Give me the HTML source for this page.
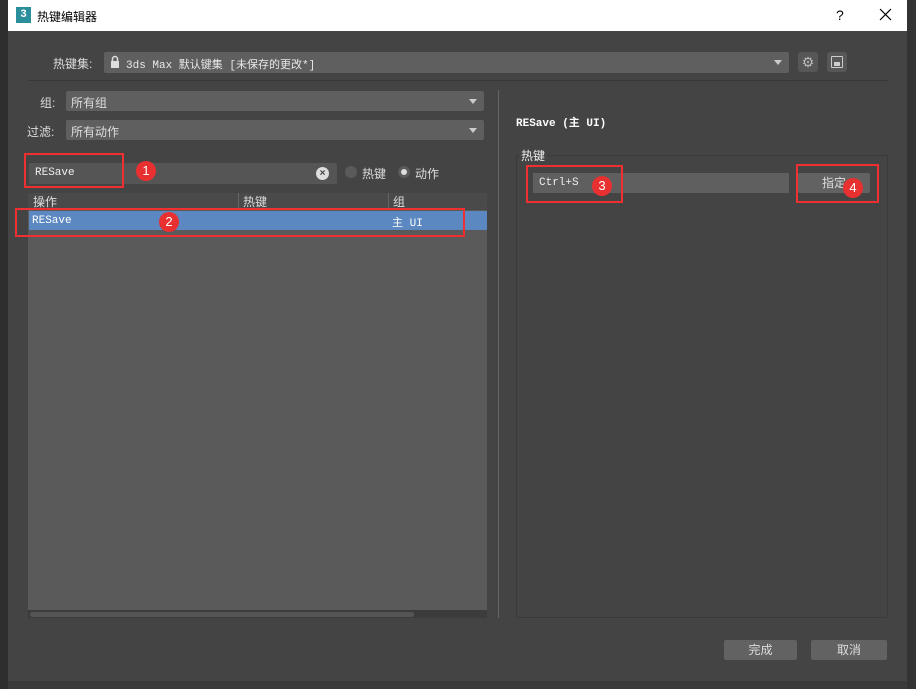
<!DOCTYPE html>
<html><head><meta charset="utf-8"><style>
*{margin:0;padding:0;box-sizing:border-box}
body{width:916px;height:689px;background:#3a3a3a;position:relative;overflow:hidden;font-family:"Liberation Sans","Noto Sans CJK SC",sans-serif;font-size:12px;color:#ddd}
.a{position:absolute}
.mono{font-family:"Liberation Mono","Noto Sans CJK SC",monospace;font-size:11px}
.combo{background:#5f5f5f;border-radius:2px}
.arr{position:absolute;right:7px;top:8px;width:0;height:0;border-left:4px solid transparent;border-right:4px solid transparent;border-top:5px solid #ccc}
.red{position:absolute;border:2px solid #f03030}
.num{position:absolute;width:20px;height:20px;border-radius:50%;background:#e83030;color:#fff;font-size:13px;text-align:center;line-height:20px;font-family:"Liberation Sans",sans-serif}
.btn{position:absolute;background:#626262;border-radius:2px;text-align:center;line-height:20px;color:#ddd}
</style></head><body>
<div class="a" style="left:0;top:0;width:8px;height:689px;background:#2e2e2e"></div>
<div class="a" style="left:907px;top:0;width:9px;height:689px;background:#333"></div>
<div class="a" style="left:8px;top:0;width:899px;height:681px;background:#444"></div>
<div class="a" style="left:8px;top:0;width:899px;height:31px;background:#fff"></div>
<div class="a" style="left:16px;top:7px;width:15px;height:16px;background:#2a8f9a;color:#fff;font-weight:bold;font-size:11px;text-align:center;line-height:15px">3</div>
<div class="a" style="left:37px;top:8px;color:#000;font-size:12px">热键编辑器</div>
<div class="a" style="left:836px;top:7px;color:#000;font-size:14px">?</div>
<svg class="a" style="left:879px;top:8px" width="13" height="13"><path d="M1 1L12 12M12 1L1 12" stroke="#000" stroke-width="1.2"/></svg>

<div class="a" style="left:53px;top:55px">热键集:</div>
<div class="a combo" style="left:104px;top:52px;width:685px;height:21px">
<svg class="a" style="left:6px;top:3px" width="10" height="14"><path d="M2.5 6V4a2.5 2.5 0 0 1 5 0v2" stroke="#ddd" stroke-width="1.5" fill="none"/><rect x="1" y="6" width="8" height="7" fill="#ddd"/></svg>
<span class="a mono" style="left:22px;top:4px;color:#e8e8e8">3ds Max 默认键集 [未保存的更改*]</span><div class="arr"></div></div>
<div class="a" style="left:798px;top:52px;width:20px;height:20px;background:#575757;border-radius:3px;color:#bbb;text-align:center;line-height:20px;font-size:14px">⚙</div>
<div class="a" style="left:827px;top:52px;width:20px;height:20px;background:#575757;border-radius:3px"><div class="a" style="left:4px;top:4px;width:12px;height:12px;border:1.5px solid #ccc;border-radius:1px"></div><div class="a" style="left:7px;top:10px;width:6px;height:4px;background:#ccc"></div></div>
<div class="a" style="left:28px;top:80px;width:860px;height:1px;background:#383838"></div>

<div class="a" style="left:40px;top:94px">组:</div>
<div class="a combo" style="left:66px;top:91px;width:418px;height:20px"><span class="a" style="left:5px;top:3px">所有组</span><div class="arr"></div></div>
<div class="a" style="left:27px;top:123px">过滤:</div>
<div class="a combo" style="left:66px;top:120px;width:418px;height:20px"><span class="a" style="left:5px;top:3px">所有动作</span><div class="arr"></div></div>

<div class="a" style="left:29px;top:163px;width:308px;height:21px;background:#555;border-radius:2px"><span class="a mono" style="left:6px;top:4px;color:#eee">RESave</span><div class="a" style="left:287px;top:4px;width:13px;height:13px;border-radius:50%;background:#ddd;color:#444;font-size:10px;text-align:center;line-height:13px;font-weight:bold">×</div></div>
<div class="a" style="left:345px;top:166px;width:12px;height:12px;border-radius:50%;background:#5a5a5a"></div>
<div class="a" style="left:362px;top:165px">热键</div>
<div class="a" style="left:398px;top:166px;width:12px;height:12px;border-radius:50%;background:#5a5a5a"><div class="a" style="left:3px;top:3px;width:6px;height:6px;border-radius:50%;background:#ddd"></div></div>
<div class="a" style="left:415px;top:165px">动作</div>

<div class="a" style="left:28px;top:193px;width:459px;height:425px;background:#5a5a5a"></div>
<div class="a" style="left:28px;top:193px;width:459px;height:17px;background:#4a4a4a"></div>
<div class="a" style="left:238px;top:193px;width:1px;height:17px;background:#666"></div>
<div class="a" style="left:388px;top:193px;width:1px;height:17px;background:#666"></div>
<div class="a" style="left:33px;top:193px">操作</div>
<div class="a" style="left:243px;top:193px">热键</div>
<div class="a" style="left:393px;top:193px">组</div>
<div class="a" style="left:29px;top:211px;width:458px;height:19px;background:#5b88c0"></div>
<div class="a mono" style="left:32px;top:215px;color:#fff">RESave</div>
<div class="a mono" style="left:392px;top:214px;color:#fff">主 UI</div>
<div class="a" style="left:28px;top:610px;width:459px;height:8px;background:#3c3c3c"></div>
<div class="a" style="left:30px;top:612px;width:384px;height:5px;border-radius:3px;background:#555"></div>

<div class="a" style="left:498px;top:90px;width:1px;height:528px;background:#666"></div>

<div class="a mono" style="left:516px;top:114px;color:#fff;font-weight:bold">RESave (主 UI)</div>
<div class="a" style="left:516px;top:155px;width:372px;height:463px;border:1px solid #3a3a3a;border-radius:2px"></div>
<div class="a" style="left:519px;top:147px;background:#444;padding:0 2px;color:#eee">热键</div>
<div class="a" style="left:533px;top:173px;width:256px;height:20px;background:#5f5f5f"><span class="a mono" style="left:6px;top:4px;color:#eee">Ctrl+S</span></div>
<div class="btn" style="left:798px;top:173px;width:72px;height:20px">指定</div>

<div class="btn" style="left:724px;top:640px;width:73px;height:20px">完成</div>
<div class="btn" style="left:811px;top:640px;width:76px;height:20px">取消</div>

<div class="red" style="left:24px;top:153px;width:100px;height:35px"></div>
<div class="red" style="left:15px;top:208px;width:450px;height:29px"></div>
<div class="red" style="left:526px;top:165px;width:97px;height:38px"></div>
<div class="red" style="left:796px;top:164px;width:83px;height:39px"></div>
<div class="num" style="left:136px;top:161px">1</div>
<div class="num" style="left:159px;top:212px">2</div>
<div class="num" style="left:592px;top:176px">3</div>
<div class="num" style="left:843px;top:178px">4</div>
</body></html>
